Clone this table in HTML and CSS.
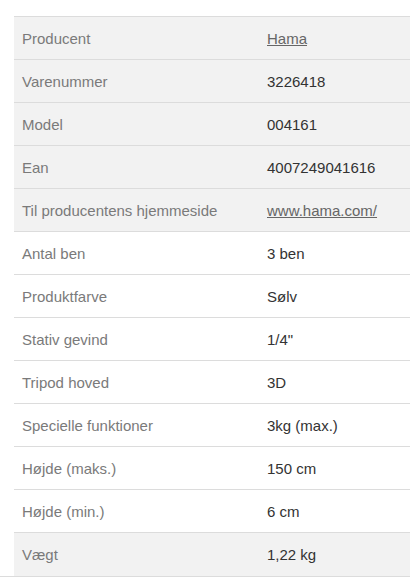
FILE: index.html
```html
<!DOCTYPE html>
<html lang="da">
<head>
<meta charset="utf-8">
<title>Specifikationer</title>
<link rel="stylesheet" href="styles.css">
</head>
<body>
<div class="specs">
  <table class="spec-table">
    <tbody>
      <tr class="alt"><td class="label">Producent</td><td class="value"><a href="#">Hama</a></td></tr>
      <tr class="alt"><td class="label">Varenummer</td><td class="value">3226418</td></tr>
      <tr class="alt"><td class="label">Model</td><td class="value">004161</td></tr>
      <tr class="alt"><td class="label">Ean</td><td class="value">4007249041616</td></tr>
      <tr class="alt"><td class="label">Til producentens hjemmeside</td><td class="value"><a href="#">www.hama.com/</a></td></tr>
      <tr><td class="label">Antal ben</td><td class="value">3 ben</td></tr>
      <tr><td class="label">Produktfarve</td><td class="value">Sølv</td></tr>
      <tr><td class="label">Stativ gevind</td><td class="value">1/4"</td></tr>
      <tr><td class="label">Tripod hoved</td><td class="value">3D</td></tr>
      <tr><td class="label">Specielle funktioner</td><td class="value">3kg (max.)</td></tr>
      <tr><td class="label">Højde (maks.)</td><td class="value">150 cm</td></tr>
      <tr><td class="label">Højde (min.)</td><td class="value">6 cm</td></tr>
      <tr class="alt"><td class="label">Vægt</td><td class="value">1,22 kg</td></tr>
    </tbody>
  </table>
</div>
</body>
</html>
```

FILE: styles.css
```css
html, body {
  margin: 0;
  padding: 0;
  background: #ffffff;
}

body {
  font-family: "Liberation Sans", Arial, sans-serif;
  font-size: 15px;
}

.specs {
  padding-top: 16px;
  border-bottom: 1px solid #dcdcdc;
  width: 410px;
}

.spec-table {
  margin-left: 14px;
  width: 396px;
  border-collapse: collapse;
}

.spec-table tr {
  border-top: 1px solid #dcdcdc;
}

.spec-table tr.alt {
  background: #f2f2f2;
}

.spec-table td {
  height: 43px;
  padding: 0 8px;
  vertical-align: middle;
  line-height: 17px;
  box-sizing: border-box;
}

.spec-table td.label {
  width: 245px;
  color: #7a7a7a;
}

.spec-table td.value {
  color: #333333;
}

.spec-table a {
  color: #666666;
  text-decoration: underline;
}
```
